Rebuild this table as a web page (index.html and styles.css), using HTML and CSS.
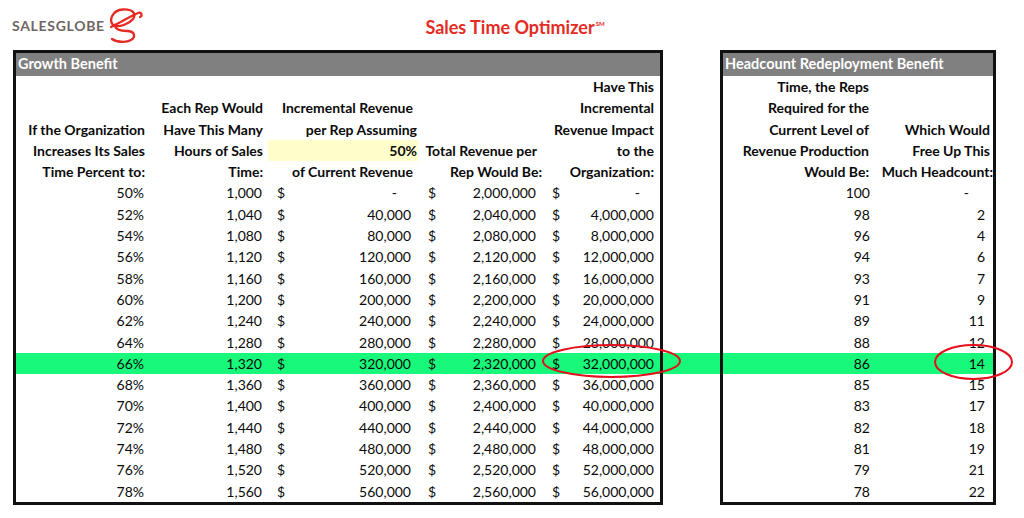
FILE: index.html
```html
<!DOCTYPE html>
<html>
<head>
<meta charset="utf-8">
<link rel="stylesheet" href="styles.css">
</head>
<body>
<div class="page">
  <header class="top">
    <div class="logo">
      <span class="logo-text">SALESGLOBE</span>
      <svg class="logo-mark" width="50" height="48" viewBox="100 0 50 48">
        <path d="M115 26 C109 21 113 10 124 9.5 C133 9 138 13 134 19 C130 24 121 27 116 26" fill="none" stroke="#e42b24" stroke-width="2.3" stroke-linecap="round"/>
        <path d="M112 27 C122 22 132 16 139 13 C143 11.5 143.5 16 141 17" fill="none" stroke="#e42b24" stroke-width="2.3" stroke-linecap="round"/>
        <path d="M116 26 C117 30 122 31 128 31 C136 31 137 37 132 40 C127 43 117 42 113 39" fill="none" stroke="#e42b24" stroke-width="2.3" stroke-linecap="round"/>
      </svg>
    </div>
    <h1 class="title">Sales Time Optimizer<sup>SM</sup></h1>
  </header>

  <main class="sheets">
    <section class="table left">
      <div class="band span5">Growth Benefit</div>

      <div class="h"></div><div class="h"></div><div class="h"></div><div class="h"></div><div class="h">Have This</div>
      <div class="h"></div><div class="h">Each Rep Would</div><div class="h c3">Incremental Revenue</div><div class="h"></div><div class="h">Incremental</div>
      <div class="h">If the Organization</div><div class="h">Have This Many</div><div class="h c3b">per Rep Assuming</div><div class="h"></div><div class="h">Revenue Impact</div>
      <div class="h">Increases Its Sales</div><div class="h">Hours of Sales</div><div class="h yellow">50%</div><div class="h">Total Revenue per</div><div class="h">to the</div>
      <div class="h">Time Percent to:</div><div class="h">Time:</div><div class="h c3">of Current Revenue</div><div class="h d4">Rep Would Be:</div><div class="h e5">Organization:</div>

      <div class="n">50%</div><div class="n">1,000</div><div class="m"><span>$</span><span class="dash">-</span></div><div class="m"><span>$</span><span>2,000,000</span></div><div class="m"><span>$</span><span class="dash">-</span></div>
      <div class="n">52%</div><div class="n">1,040</div><div class="m"><span>$</span><span>40,000</span></div><div class="m"><span>$</span><span>2,040,000</span></div><div class="m"><span>$</span><span>4,000,000</span></div>
      <div class="n">54%</div><div class="n">1,080</div><div class="m"><span>$</span><span>80,000</span></div><div class="m"><span>$</span><span>2,080,000</span></div><div class="m"><span>$</span><span>8,000,000</span></div>
      <div class="n">56%</div><div class="n">1,120</div><div class="m"><span>$</span><span>120,000</span></div><div class="m"><span>$</span><span>2,120,000</span></div><div class="m"><span>$</span><span>12,000,000</span></div>
      <div class="n">58%</div><div class="n">1,160</div><div class="m"><span>$</span><span>160,000</span></div><div class="m"><span>$</span><span>2,160,000</span></div><div class="m"><span>$</span><span>16,000,000</span></div>
      <div class="n">60%</div><div class="n">1,200</div><div class="m"><span>$</span><span>200,000</span></div><div class="m"><span>$</span><span>2,200,000</span></div><div class="m"><span>$</span><span>20,000,000</span></div>
      <div class="n">62%</div><div class="n">1,240</div><div class="m"><span>$</span><span>240,000</span></div><div class="m"><span>$</span><span>2,240,000</span></div><div class="m"><span>$</span><span>24,000,000</span></div>
      <div class="n">64%</div><div class="n">1,280</div><div class="m"><span>$</span><span>280,000</span></div><div class="m"><span>$</span><span>2,280,000</span></div><div class="m"><span>$</span><span>28,000,000</span></div>
      <div class="n hl">66%</div><div class="n hl">1,320</div><div class="m hl"><span>$</span><span>320,000</span></div><div class="m hl"><span>$</span><span>2,320,000</span></div><div class="m hl"><span>$</span><span>32,000,000</span></div>
      <div class="n">68%</div><div class="n">1,360</div><div class="m"><span>$</span><span>360,000</span></div><div class="m"><span>$</span><span>2,360,000</span></div><div class="m"><span>$</span><span>36,000,000</span></div>
      <div class="n">70%</div><div class="n">1,400</div><div class="m"><span>$</span><span>400,000</span></div><div class="m"><span>$</span><span>2,400,000</span></div><div class="m"><span>$</span><span>40,000,000</span></div>
      <div class="n">72%</div><div class="n">1,440</div><div class="m"><span>$</span><span>440,000</span></div><div class="m"><span>$</span><span>2,440,000</span></div><div class="m"><span>$</span><span>44,000,000</span></div>
      <div class="n">74%</div><div class="n">1,480</div><div class="m"><span>$</span><span>480,000</span></div><div class="m"><span>$</span><span>2,480,000</span></div><div class="m"><span>$</span><span>48,000,000</span></div>
      <div class="n">76%</div><div class="n">1,520</div><div class="m"><span>$</span><span>520,000</span></div><div class="m"><span>$</span><span>2,520,000</span></div><div class="m"><span>$</span><span>52,000,000</span></div>
      <div class="n">78%</div><div class="n">1,560</div><div class="m"><span>$</span><span>560,000</span></div><div class="m"><span>$</span><span>2,560,000</span></div><div class="m"><span>$</span><span>56,000,000</span></div>
    </section>

    <div class="gap"><div class="gap-hl"></div></div>

    <section class="table right">
      <div class="band span2">Headcount Redeployment Benefit</div>
      <div class="h">Time, the Reps</div><div class="h"></div>
      <div class="h">Required for the</div><div class="h"></div>
      <div class="h">Current Level of</div><div class="h">Which Would</div>
      <div class="h">Revenue Production</div><div class="h">Free Up This</div>
      <div class="h">Would Be:</div><div class="h g7">Much Headcount:</div>

      <div class="n">100</div><div class="n"><span class="dash">-</span></div>
      <div class="n">98</div><div class="n">2</div>
      <div class="n">96</div><div class="n">4</div>
      <div class="n">94</div><div class="n">6</div>
      <div class="n">93</div><div class="n">7</div>
      <div class="n">91</div><div class="n">9</div>
      <div class="n">89</div><div class="n">11</div>
      <div class="n">88</div><div class="n">12</div>
      <div class="n hl">86</div><div class="n hl">14</div>
      <div class="n">85</div><div class="n">15</div>
      <div class="n">83</div><div class="n">17</div>
      <div class="n">82</div><div class="n">18</div>
      <div class="n">81</div><div class="n">19</div>
      <div class="n">79</div><div class="n">21</div>
      <div class="n">78</div><div class="n">22</div>
    </section>
  </main>

  <svg class="marks" width="1024" height="518" viewBox="0 0 1024 518">
    <ellipse cx="611.5" cy="361" rx="68.5" ry="16" fill="none" stroke="#e3101b" stroke-width="2"/>
    <ellipse cx="973.5" cy="362" rx="38.5" ry="17" fill="none" stroke="#e3101b" stroke-width="2"/>
  </svg>
</div>
</body>
</html>
```

FILE: styles.css
```css
* { box-sizing: border-box; }
html, body { margin: 0; padding: 0; background: #fff; }
body {
  width: 1024px;
  height: 518px;
  overflow: hidden;
  font-family: Lato, "Liberation Sans", sans-serif;
  color: #0a0a0a;
}
.page { position: relative; width: 1024px; height: 518px; }

.top {
  height: 50px;
  display: grid;
  grid-template-columns: 1fr;
  grid-template-rows: 50px;
}
.logo {
  grid-area: 1 / 1;
  justify-self: start;
  display: flex;
  align-items: flex-start;
  padding-left: 12px;
}
.logo-text {
  margin-top: 17px;
  font-weight: 700;
  font-size: 14px;
  letter-spacing: 0.7px;
  color: #6e6663;
}
.logo-mark { margin-left: -6px; }
.title {
  grid-area: 1 / 1;
  justify-self: center;
  margin: 13px 0 0 6px;
  font-size: 18px;
  line-height: 21.6px;
  font-weight: 700;
  color: #e42b24;
}
.title sup { font-size: 6px; vertical-align: 8px; margin-left: 1px; }

.sheets {
  display: flex;
  padding-left: 13px;
}
.table {
  border: 3px solid #111;
  display: grid;
  grid-template-rows: 23px repeat(20, 21.3px);
  font-size: 14px;
  line-height: 21.3px;
}
.table.left { grid-template-columns: 134px 118px 150px 124px 118px; }
.table.right { grid-template-columns: 149px 121px; }

.band {
  background: #808080;
  color: #fff;
  font-weight: 700;
  font-size: 14.5px;
  line-height: 21px;
  padding-left: 2px;
  white-space: nowrap;
}
.span5 { grid-column: 1 / span 5; }
.span2 { grid-column: 1 / span 2; }

.h {
  font-weight: 700;
  text-align: right;
  padding-right: 5px;
  white-space: nowrap;
}
.left .h:nth-child(5n+1) { padding-right: 6px; }
.h.c3 { padding-right: 5px; }
.h.c3b { padding-right: 1px; }
.h.d4 { padding-right: 0; }
.h.e5 { padding-right: 0; }
.h.yellow { background: #ffffcc; padding-right: 1px; }
.right .h { padding-right: 3px; }
.right .h.g7 { padding-right: 0; }

.n {
  text-align: right;
  padding-right: 6px;
  white-space: nowrap;
}
.right .n { padding-right: 2px; }
.right .n:nth-child(2n+1) { padding-right: 8px; }
.m {
  display: flex;
  justify-content: space-between;
  padding: 0 6px 0 10px;
  white-space: nowrap;
}
.left .m:nth-child(5n+4) { padding: 0 7px 0 9px; }
.dash { padding-right: 14px; }
.right .dash { padding-right: 16px; }
.hl { background: #18f87a; }

.gap {
  width: 57px;
  display: grid;
  grid-template-rows: 3px 23px repeat(20, 21.3px);
}
.gap-hl { grid-row: 16; background: #18f87a; }

.marks {
  position: absolute;
  left: 0;
  top: 0;
  pointer-events: none;
}
```
